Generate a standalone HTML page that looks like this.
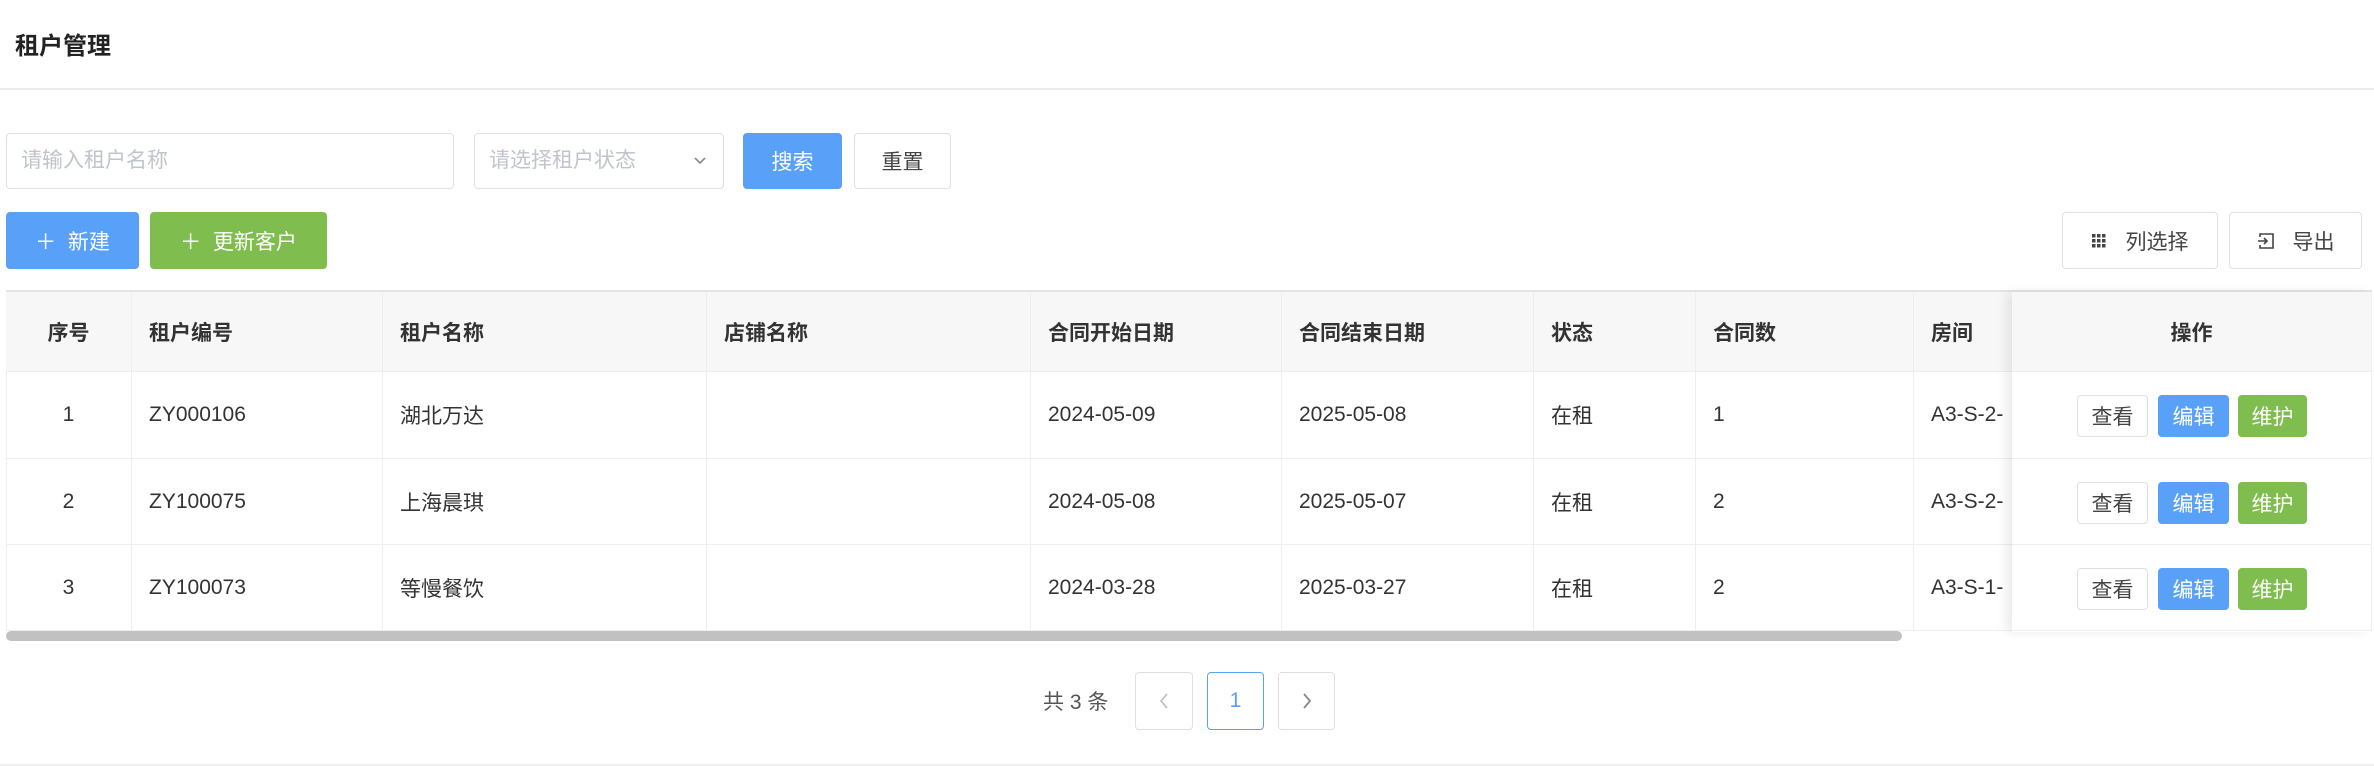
<!DOCTYPE html>
<html><head><meta charset="utf-8"><style>
*{box-sizing:border-box;margin:0;padding:0}
body{width:2374px;height:766px;background:#fff;font-family:"Liberation Sans","Noto Sans CJK SC",sans-serif;color:#333;position:relative;overflow:hidden;font-size:21px}
.a{position:absolute}
.btn{position:absolute;border-radius:4px;display:flex;align-items:center;justify-content:center;font-size:21px}
.wb{border:1px solid #dcdfe6;background:#fff;color:#444}
.bb{background:#59a0f9;color:#fff}
.gb{background:#7fbd4f;color:#fff}
.cell{position:absolute;display:flex;align-items:center;border-right:1px solid #ebeef5;border-bottom:1px solid #ebeef5;padding-left:17px}
.h{background:#f7f7f7;font-weight:bold;color:#333}
</style></head><body>
<div class="a" style="left:15px;top:26px;font-size:24px;font-weight:bold;color:#222">租户管理</div>
<div class="a" style="left:0;top:88px;width:2374px;height:2px;background:#ececec"></div>

<div class="a" style="left:6px;top:133px;width:448px;height:56px;border:1px solid #dcdfe6;border-radius:4px;color:#c0c4cc;padding-left:14px;line-height:54px">请输入租户名称</div>
<div class="a" style="left:474px;top:133px;width:250px;height:56px;border:1px solid #dcdfe6;border-radius:4px;color:#c0c4cc;padding-left:14px;line-height:54px">请选择租户状态<svg class="a" style="left:218px;top:22px" width="14" height="10" viewBox="0 0 14 10"><path d="M2 2l5 5 5-5" fill="none" stroke="#888" stroke-width="1.6"/></svg></div>
<div class="btn bb" style="left:743px;top:133px;width:99px;height:56px">搜索</div>
<div class="btn wb" style="left:854px;top:133px;width:97px;height:56px">重置</div>

<div class="btn bb" style="left:6px;top:212px;width:133px;height:57px">＋&nbsp;&nbsp;新建</div>
<div class="btn gb" style="left:150px;top:212px;width:177px;height:57px">＋&nbsp;&nbsp;更新客户</div>
<div class="btn wb" style="left:2062px;top:212px;width:156px;height:57px"><svg width="14" height="14" viewBox="0 0 14 14" style="margin-right:20px" fill="#444"><rect x="0" y="0" width="3.5" height="3.5"/><rect x="5" y="0" width="3.5" height="3.5"/><rect x="10" y="0" width="3.5" height="3.5"/><rect x="0" y="5" width="3.5" height="3.5"/><rect x="5" y="5" width="3.5" height="3.5"/><rect x="10" y="5" width="3.5" height="3.5"/><rect x="0" y="10" width="3.5" height="3.5"/><rect x="5" y="10" width="3.5" height="3.5"/><rect x="10" y="10" width="3.5" height="3.5"/></svg>列选择</div>
<div class="btn wb" style="left:2229px;top:212px;width:133px;height:57px"><svg width="18" height="18" viewBox="0 0 18 18" style="margin-right:18px"><path d="M3 5V2h13v14H3v-3M1 9h9M7 6l3 3-3 3" fill="none" stroke="#444" stroke-width="1.6"/></svg>导出</div>

<div class="a" style="left:6px;top:290px;width:2366px;height:341px;border-top:2px solid #e4e4e4;border-left:1px solid #ebeef5"></div>
<div id="t"></div>
<div class="a" style="left:6px;top:631px;width:1896px;height:10px;background:#c1c1c1;border-radius:5px"></div>
<div class="a" style="left:2012px;top:292px;width:360px;height:340px;box-shadow:-6px 0 10px rgba(0,0,0,0.08);background:#fff"></div>
<div id="op"></div>

<div class="a" style="left:1043px;top:686px;color:#555">共 3 条</div>
<div class="btn wb" style="left:1135px;top:672px;width:58px;height:58px"><svg width="12" height="18" viewBox="0 0 12 18"><path d="M9 2L3 9l6 7" fill="none" stroke="#c0c4cc" stroke-width="1.8"/></svg></div>
<div class="btn wb" style="left:1207px;top:672px;width:57px;height:58px;border-color:#59a0f9;color:#59a0f9">1</div>
<div class="btn wb" style="left:1278px;top:672px;width:57px;height:58px"><svg width="12" height="18" viewBox="0 0 12 18"><path d="M3 2l6 7-6 7" fill="none" stroke="#888" stroke-width="1.8"/></svg></div>
<div class="a" style="left:0;top:764px;width:2374px;height:2px;background:#f0f0f0"></div>

<script>
var cols=[6,132,383,707,1031,1282,1534,1696,1914,2040];
var H=["序号","租户编号","租户名称","店铺名称","合同开始日期","合同结束日期","状态","合同数","房间"];
var R=[["1","ZY000106","湖北万达","","2024-05-09","2025-05-08","在租","1","A3-S-2-"],
["2","ZY100075","上海晨琪","","2024-05-08","2025-05-07","在租","2","A3-S-2-"],
["3","ZY100073","等慢餐饮","","2024-03-28","2025-03-27","在租","2","A3-S-1-"]];
var ys=[292,372,459,545,631],s="";
function c(i,y0,y1,t,cls){var st=i==0?"justify-content:center;padding-left:0;":"";s+='<div class="cell '+cls+'" style="'+st+'left:'+cols[i]+'px;top:'+y0+'px;width:'+(cols[i+1]-cols[i])+'px;height:'+(y1-y0)+'px">'+t+'</div>';}
for(var i=0;i<9;i++)c(i,ys[0],ys[1],H[i],"h");
for(var r=0;r<3;r++)for(var i=0;i<9;i++)c(i,ys[r+1],ys[r+2],R[r][i],"");
document.getElementById("t").innerHTML=s;
var o='<div class="cell h" style="left:2012px;top:292px;width:360px;height:80px;justify-content:center;padding:0">操作</div>';
for(var r=0;r<3;r++){var y=ys[r+1];o+='<div class="cell" style="left:2012px;top:'+y+'px;width:360px;height:'+(ys[r+2]-y)+'px;background:#fff"></div>';
var by=y+23;o+='<div class="btn wb" style="left:2077px;top:'+by+'px;width:71px;height:42px">查看</div><div class="btn bb" style="left:2158px;top:'+by+'px;width:71px;height:42px">编辑</div><div class="btn gb" style="left:2238px;top:'+by+'px;width:69px;height:42px">维护</div>';}
document.getElementById("op").innerHTML=o;
</script>
</body></html>
